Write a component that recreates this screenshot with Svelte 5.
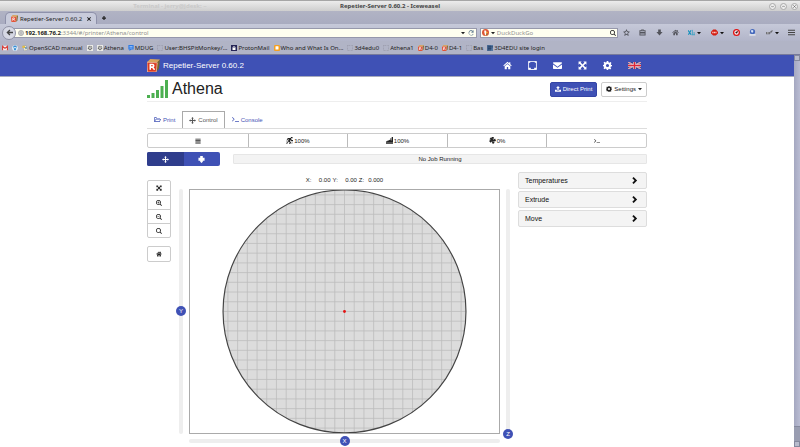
<script>
  const paths = {
    home: 'M8 1.5 0.5 8l1.2 1.2L8 4l6.300 5.200L15.500 8 13 5.800V2h-2v2zM8 5.400 3 9.500V14.500h3.800V10.500h2.400v4H13V9.500z',
    mail: 'M0 3.200Q0 2 1.200 2h13.600Q16 2 16 3.200V4L8 10 0 4zM0 6l8 6 8-6v6.800Q16 14 14.800 14H1.200Q0 14 0 12.800z',
    expand: 'M1 1h5.500L4.700 2.800 8 6.100l3.300-3.300L9.500 1H15v5.500l-1.800-1.800L9.900 8l3.300 3.300L15 9.500V15H9.500l1.800-1.800L8 9.900l-3.300 3.300L6.500 15H1V9.500l1.800 1.800L6.100 8 2.800 4.700 1 6.500z',
    gear: 'M6.700 0h2.600l.5 2.300 1.500.6 2-1.300 1.800 1.900-1.300 2 .6 1.400L16 7v2.500l-2 .4-.7 1.500 1.300 2-1.900 1.800-2-1.300-1.400.6L9.300 16H6.700l-.5-2-1.500-.6-2 1.300-1.800-1.900 1.300-2L1.600 9.900 0 9.500V7l1.600-.4.6-1.500-1.300-2 1.800-1.800 2 1.300 1.500-.6zM8 5.200a2.800 2.800 0 1 0 0 5.600 2.800 2.800 0 0 0 0-5.600z',
    upload: 'M8 0l5 5.500h-3V10H6V5.500H3zM0 10h4.500v2h7v-2H16v5.500H0z',
    move: 'M8 0l3 3.500H9.200v3.300h3.300V5L16 8l-3.500 3V9.200H9.200v3.300H11L8 16l-3-3.500h1.800V9.200H3.500V11L0 8l3.500-3v1.800h3.300V3.500H5z',
    folder: 'M.5 13.500V3h5l1.500 2h6v2h3L13 13.500zM2 10l2-3h7.500V6.200H6L4.600 4.500H2zM2.400 12.200h9.800L13.900 8.200H4.800z',
    terminal: 'M0 3.500 1 2.500 6 7.500 1 12.500 0 11.500 4 7.500zM7 12h9v1.500H7z',
    bars: 'M1 2h14v2H1zM1 5.500h14v2H1zM1 9h14v2H1zM1 12.500h14v2H1z',
    chevron: 'M3 3l3-3 8 8-8 8-3-3 5-5z',
    speed: 'M11 0h4v3h-4zM4 2.500h7l2 4.500h3v2h-4l-1.500-2L9 9.500l2.500 2.500-2 4H7l1.500-3.500L6 10.500 3.500 15H0v-2h2.500L6.500 5h-2L3 8H1zM12 11h4v1h-4zM11 13.500h4v1h-4zM0 9.500h3v1H0z',
    flow: 'M0 10l4-1V7l3 1.500V6l3 1.500V3h2v5h1V0h3v13H0zM0 14h16v2H0z',
    fan: 'M6 0h5l-.5 4L9.500 7 14 3.500 16 9l-4 1-3-1 4 4-4 3-2-3 .500-4L4 13l-4-4 3-2 3 .500L1 5l3-4 3 1.500L7.500 6z',
    extruder: 'M5 0h6v4h4v7h-4v2l-3 3-3-3v-2H1V4h4z',
    zoomIn: 'M6.500 0a6.500 6.500 0 1 0 3.800 11.800L14.500 16l1.500-1.500-4.200-4.200A6.500 6.500 0 0 0 6.500 0zm0 2a4.500 4.500 0 1 1 0 9 4.500 4.500 0 0 1 0-9zM5.700 3.800v2H3.800v1.500h1.900v2h1.600v-2h1.900V5.800H7.300v-2z',
    zoomOut: 'M6.500 0a6.500 6.500 0 1 0 3.800 11.800L14.500 16l1.500-1.500-4.200-4.200A6.500 6.500 0 0 0 6.500 0zm0 2a4.500 4.500 0 1 1 0 9 4.500 4.500 0 0 1 0-9zM3.800 5.800v1.500h5.400V5.800z',
    search: 'M6.500 0a6.500 6.500 0 1 0 3.800 11.800L14.500 16l1.500-1.500-4.200-4.200A6.500 6.500 0 0 0 6.500 0zm0 2a4.500 4.500 0 1 1 0 9 4.500 4.500 0 0 1 0-9z',
    caret: 'M0 4h16L8 13z',
    back: 'M8 1 1 8l7 7 2-2.200L7 9.800h9V6.200H7l3-3z',
    plus: 'M5.500 0h5v5.500H16v5h-5.500V16h-5v-5.500H0v-5h5.500z',
    cross: 'M2 0l6 5 6-5 2 2-5 6 5 6-2 2-6-5-6 5-2-2 5-6-5-6z',
    reload: 'M13 2l2-2v7H8l3-3a5 5 0 1 0 2 6l2 .6A7 7 0 1 1 13 2z',
    down: 'M5 1h6v6h4l-7 8-7-8h4z',
    star: 'M8 0l2.300 5.300L16 6l-4.200 3.900L13 16l-5-3-5 3 1.200-6.100L0 6l5.700-.700zM8 4 6.700 6.700l-3 .500L6 9.300l-.6 3L8 10.800l2.600 1.500-.6-3 2.300-2.100-3-.500z',
    clip: 'M1 3h4V1h6v2h4v12H1zM3 5v2h10V5zM3 9v1h10V9zM3 12v1h10v-1zM6 2v1h4V2z'
  };

  const bookmarks = [
    { icon: 'gmail', text: '' },
    { icon: 'blue', text: '' },
    { icon: 'scad', text: 'OpenSCAD manual' },
    { icon: 'cog', text: '' },
    { icon: 'cog', text: 'Athena' },
    { icon: 'mdug', text: 'MDUG' },
    { icon: 'blank', text: 'User:BHSPitMonkey/...' },
    { icon: 'proton', text: 'ProtonMail' },
    { icon: 'orange', text: 'Who and What Is On...' },
    { icon: 'blank', text: '3d4edu0' },
    { icon: 'blank', text: 'Athena1' },
    { icon: 'rep', text: 'D4-0' },
    { icon: 'rep', text: 'D4-1' },
    { icon: 'blank', text: 'Bas' },
    { icon: 'edu', text: '3D4EDU site login' }
  ];

  const gridLines = Array.from({ length: 25 }, (_, i) => -120 + i * 10);

  let x = $state(50);
  let y = $state(50);
  let z = $state(0);
  let mode = $state('move');
</script>

{#snippet icon(name)}
  <svg class="ico" viewBox="0 0 16 16" aria-hidden="true"><path d={paths[name]} fill="currentColor" fill-rule="evenodd" /></svg>
{/snippet}

{#snippet repetier()}
  <svg class="ico" viewBox="0 0 24 24" aria-hidden="true">
    <path d="M0 6 6 0l18 1-5 6z" fill="#d9a45c" /><path d="M18 7l6-6-2 17-5 6z" fill="#75662c" />
    <path d="M0 6l19 1-2 17H1z" fill="#dc3a22" stroke="#f0b79a" stroke-width="1.500" />
    <path d="M6 20V10h4a2.500 2.500 0 0 1 0 5H7m3 0 4 5" fill="none" stroke="#fff" stroke-width="2.800" />
  </svg>
{/snippet}

{#snippet bookmarkIcon(name)}
  {#if name === 'rep'}{@render repetier()}
  {:else}
    <svg class="ico" viewBox="0 0 16 16" aria-hidden="true">
      {#if name === 'gmail'}
        <path d="M0 2h16v12H0z" fill="#f6eeee" /><path d="M1.500 14V3.500L8 9l6.500-5.500V14" fill="none" stroke="#d8403a" stroke-width="3" />
      {:else if name === 'blue'}
        <circle cx="8" cy="8" r="7.500" fill="#e8f2fb" /><path d="M3 6a5 5 0 0 1 10 0l-2 1-3-3-3 3zM4 10l4-2 4 2-4 5z" fill="#2484d0" />
      {:else if name === 'scad'}
        <path d="M2 3l9-2 4 12-9 3z" fill="#f2ead0" stroke="#7b8794" /><path d="M1 2h7v6H1z" fill="#e7bf45" /><path d="M7 7l6-1M8 10l5-1" stroke="#4b84aa" stroke-width="2" />
      {:else if name === 'cog'}
        <path d="M0 0h16v16H0z" fill="#ebebe6" /><circle cx="8" cy="8" r="4.500" fill="none" stroke="#55575a" stroke-width="3" stroke-dasharray="2 1.500" /><circle cx="8" cy="8" r="3" fill="none" stroke="#55575a" />
      {:else if name === 'mdug'}
        <path d="M1 0h14v12H9l-5 4v-4H1z" fill="#2d7be5" /><path d="M4 4h8M4 8h8" stroke="#d6e5ff" stroke-width="1.500" />
      {:else if name === 'proton'}
        <path d="M0 0h16v16H0z" fill="#272657" /><path d="M4 13V7a4 4 0 0 1 8 0v6z" fill="#fff" /><path d="M6 7a2 2 0 0 1 4 0z" fill="#272657" />
      {:else if name === 'orange'}
        <rect width="16" height="16" rx="3" fill="#f5a021" /><rect x="4" y="3" width="8" height="9" rx="1" fill="#fff" />
      {:else if name === 'edu'}
        <path d="M0 0h16v16H0z" fill="#5678a2" /><path d="M3 1v14M8 1v14M4 5h12M3 10h9" stroke="#1c365e" stroke-width="2" />
      {:else}
        <rect x="1" y="1" width="14" height="14" rx="1" fill="none" stroke="#858692" stroke-width="1.500" stroke-dasharray="2 2" />
      {/if}
    </svg>
  {/if}
{/snippet}

<div class="window">
  <header class="chrome">
    <div class="titlebar">
      <span class="ghost">Terminal - jerry@jdesk: ~</span>
      <strong>Repetier-Server 0.60.2 - Iceweasel</strong>
      <div class="winbtns">
        <button aria-label="Minimize"><svg class="ico" viewBox="0 0 16 16"><path d="M4 6l4 4 4-4" fill="none" stroke="#555" stroke-width="2" /></svg></button>
        <button aria-label="Maximize"><svg class="ico" viewBox="0 0 16 16"><path d="M4 10l4-4 4 4" fill="none" stroke="#555" stroke-width="2" /></svg></button>
        <button aria-label="Close"><svg class="ico" viewBox="0 0 16 16"><path d="M4 4l8 8M12 4l-8 8" fill="none" stroke="#555" stroke-width="2" /></svg></button>
      </div>
    </div>

    <div class="tabstrip">
      <div class="browsertab">
        {@render repetier()}<span>Repetier-Server 0.60.2</span>
        <button class="tiny" aria-label="Close tab">{@render icon('cross')}</button>
      </div>
      <button class="tiny" aria-label="New tab">{@render icon('plus')}</button>
    </div>

    <div class="toolbar">
      <button class="back" aria-label="Back">{@render icon('back')}</button>
      <div class="field url">
        <svg class="ico" viewBox="0 0 16 16" aria-hidden="true"><circle cx="8" cy="8" r="7" fill="#ddd" stroke="#999" stroke-width="1.500" /><path d="M1 8h14M8 1v14M3 4q5 3 10 0M3 12q5-3 10 0" fill="none" stroke="#999" /></svg>
        <label for="url">192.168.76.2</label><input id="url" type="text" value=":3344/#/printer/Athena/control" />
        <button class="caret" aria-label="History">{@render icon('caret')}</button>
        <button class="reload" aria-label="Reload">{@render icon('reload')}</button>
      </div>
      <div class="field find">
        <svg class="ico" viewBox="0 0 16 16" aria-hidden="true"><circle cx="8" cy="8" r="8" fill="#dc5734" /><path d="M6 3q5 0 4 5l-1 6H7L5 6z" fill="#fff" /><path d="M9 7h4v2H9z" fill="#f6c52d" /><path d="M9 11h3v2H9z" fill="#57a541" /></svg>
        <button class="caret" aria-label="Search engine">{@render icon('caret')}</button>
        <input type="text" aria-label="Search" placeholder="DuckDuckGo" />
        <button class="mag" aria-label="Go">{@render icon('search')}</button>
      </div>
      <div class="tools">
        <button aria-label="Bookmark">{@render icon('star')}</button>
        <button aria-label="Bookmarks list">{@render icon('clip')}</button>
        <button aria-label="Downloads">{@render icon('down')}</button>
        <button aria-label="Home">{@render icon('home')}</button>
        <button aria-label="Downloader"><svg class="ico" viewBox="0 0 16 16"><path d="M0 3l7 10M7 3l-6 10" stroke="#1591bd" stroke-width="2.500" /><path d="M10 2v12M14 7v7M8 13h8" stroke="#42a4c4" stroke-width="2" /></svg><span class="caret">{@render icon('caret')}</span></button>
        <button aria-label="Ad blocker"><svg class="ico" viewBox="0 0 16 16"><path d="M5 1h6l5 5v4l-5 5H5l-5-5V6z" fill="#d41f13" /><path d="M3 8h10" stroke="#ffd7d2" stroke-width="3" stroke-dasharray="2.500 1" /></svg><span class="caret">{@render icon('caret')}</span></button>
        <button aria-label="Record"><svg class="ico" viewBox="0 0 16 16"><circle cx="8" cy="8" r="6.500" fill="#fff" stroke="#e01111" stroke-width="3" /><circle cx="8" cy="8" r="2.500" fill="#3b1010" /><path d="M8 8l3-3" stroke="#3b1010" stroke-width="2" /></svg></button>
        <button aria-label="Network"><svg class="ico" viewBox="0 0 16 16"><circle cx="8" cy="6" r="6" fill="#4569bc" /><path d="M4 4q3-3 6 0l-1 4H6z" fill="#d9e6fa" /><path d="M1 12h14v3H1z" fill="#eceff4" /></svg></button>
        <button aria-label="Proxy"><svg class="ico" viewBox="0 0 16 16"><path d="M0 7h9v5H0zM10 5l5-3v3l-5 6z" fill="#6b6b70" /><path d="M2 9h4" stroke="#ddd" stroke-width="2" /></svg><span class="caret">{@render icon('caret')}</span></button>
        <button aria-label="Menu"><svg class="ico" viewBox="0 0 16 16"><path d="M0 3h16M0 8h16M0 13h16" stroke="#444" stroke-width="2.500" /></svg></button>
      </div>
    </div>

    <nav class="bookmarks" aria-label="Bookmarks">
      {#each bookmarks as b}
        <a href="#bookmark" aria-label={b.text || b.icon}>{@render bookmarkIcon(b.icon)}{#if b.text}<span>{b.text}</span>{/if}</a>
      {/each}
    </nav>
  </header>

  <div class="viewport">
    <div class="page">
      <div class="appbar">
        <div class="container bar">
          <a class="brand" href="#home">{@render repetier()}<span>Repetier-Server 0.60.2</span></a>
          <nav class="appnav" aria-label="Server">
            <a href="#home" aria-label="Home">{@render icon('home')}</a>
            <a href="#printers" aria-label="Printers"><svg class="ico" viewBox="0 0 16 16"><path d="M1 .8h14v14.400H1z" fill="none" stroke="#fff" stroke-width="1.500" /><path d="M1 12h4v2h6v-2h4v3H1zM1 1h3v2H1zM12 1h3v2h-3z" fill="#fff" /></svg></a>
            <a href="#messages" aria-label="Messages">{@render icon('mail')}</a>
            <a href="#fullscreen" aria-label="Full screen">{@render icon('expand')}</a>
            <a href="#settings" aria-label="Settings">{@render icon('gear')}</a>
            <a class="flag" href="#language" aria-label="Language"><svg viewBox="0 0 26 14"><path d="M0 0h26v14H0z" fill="#35438f" /><path d="M0 0l26 14M26 0 0 14" stroke="#e8e8ee" stroke-width="2.800" /><path d="M0 0l26 14M26 0 0 14" stroke="#d53645" stroke-width="1" /><path d="M13 0v14M0 7h26" stroke="#f2eef0" stroke-width="5" /><path d="M13 0v14M0 7h26" stroke="#dc2638" stroke-width="3" /></svg></a>
          </nav>
        </div>
      </div>

      <main class="container">
        <div class="heading">
          <svg class="signal" viewBox="0 0 21 18" aria-hidden="true"><path d="M0 15h3v3H0zM4.500 13h3v5h-3zM9 10h3v8H9zM13.500 6h3v12h-3zM18 0h3v18h-3z" fill="#4caf50" /></svg>
          <h1>Athena</h1>
          <button class="primary">{@render icon('upload')}Direct Print</button>
          <button class="plain">{@render icon('gear')}Settings<span class="caret">{@render icon('caret')}</span></button>
        </div>

        <nav class="tabs" aria-label="Printer">
          <a href="#print">{@render icon('folder')}Print</a>
          <a class="active" href="#control">{@render icon('move')}Control</a>
          <a href="#console">{@render icon('terminal')}Console</a>
        </nav>

        <div class="group">
          <button aria-label="Menu">{@render icon('bars')}</button>
          <button class="wide">{@render icon('speed')}100%</button>
          <button class="wide">{@render icon('flow')}100%</button>
          <button class="wide">{@render icon('fan')}0%</button>
          <button aria-label="G-code">{@render icon('terminal')}</button>
        </div>

        <div class="jobrow">
          <div class="toggle">
            <button class:on={mode === 'move'} aria-label="Move head" onclick={() => (mode = 'move')}>{@render icon('move')}</button>
            <button class:on={mode === 'extrude'} aria-label="Extruder" onclick={() => (mode = 'extrude')}>{@render icon('extruder')}</button>
          </div>
          <div class="job">No Job Running</div>
        </div>

        <div class="columns">
          <div class="zoomcol">
            <div class="vgroup">
              <button aria-label="Fit">{@render icon('expand')}</button>
              <button aria-label="Zoom in">{@render icon('zoomIn')}</button>
              <button aria-label="Zoom out">{@render icon('zoomOut')}</button>
              <button aria-label="Reset zoom">{@render icon('search')}</button>
            </div>
            <div class="vgroup"><button aria-label="Home all">{@render icon('home')}</button></div>
          </div>

          <div class="bed">
            <div class="readout"><span>X:</span><span class="num">0.00</span><span>Y:</span><span class="num">0.00</span><span>Z:</span><span class="num">0.000</span></div>
            <div class="track vert yaxis">
              <input type="range" aria-label="Y position" bind:value={y} /><span class="knob" style:top="{100 - y}%">Y</span>
            </div>
            <svg class="plate" viewBox="-159 -125 318 250" role="img" aria-label="Print bed">
              <defs><clipPath id="disc"><circle r="125" /></clipPath></defs>
              <circle r="125" fill="#dcdcdc" />
              <g clip-path="url(#disc)" stroke="#bcbcbc" stroke-width="0.800">
                {#each gridLines as g}
                  <line x1={g} x2={g} y1="-125" y2="125" /><line y1={g} y2={g} x1="-125" x2="125" />
                {/each}
              </g>
              <circle r="125" fill="none" stroke="#444" stroke-width="1.200" />
              <circle r="1.500" fill="#e31313" />
            </svg>
            <div class="track vert zaxis">
              <input type="range" aria-label="Z position" bind:value={z} /><span class="knob" style:top="{100 - z}%">Z</span>
            </div>
            <div class="track horiz">
              <input type="range" aria-label="X position" bind:value={x} /><span class="knob" style:left="{x}%">X</span>
            </div>
          </div>

          <div class="panels">
            {#each ['Temperatures', 'Extrude', 'Move'] as title}
              <button><span>{title}</span>{@render icon('chevron')}</button>
            {/each}
          </div>
        </div>
      </main>
    </div>
    <div class="scrollbar" aria-hidden="true"><i></i><b></b><i></i></div>
  </div>
</div>

<style>
  :global(body) { margin: 0; background: #fff; }
  .window { display: flex; flex-direction: column; min-height: 100vh; font-family: "Liberation Sans", Arial, sans-serif; font-size: 6px; line-height: 8px; color: #222; }
  .window :is(button, input) { font: inherit; color: inherit; margin: 0; padding: 0; border: 0; background: none; box-sizing: border-box; }
  button { display: flex; align-items: center; justify-content: center; gap: 2px; white-space: nowrap; }
  a { color: inherit; text-decoration: none; }
  .ico { display: block; width: 7px; height: 7px; flex: none; }
  .caret .ico { width: 4px; height: 4px; }

  .chrome { height: 55px; box-sizing: border-box; border-bottom: 1px solid #777a9b; background: #aeb1c4; font-family: "Noto Sans", "DejaVu Sans", sans-serif; color: #222; }
  .titlebar { display: grid; grid-template-columns: 1fr auto 1fr; align-items: center; height: 11px; box-sizing: border-box; padding-right: 2px; border-top: 1px solid #a6a6a6; background: linear-gradient(#ececec, #cecece); color: #444; }
  .titlebar .ghost { justify-self: center; padding-left: 0; color: #c9c9c9; font-weight: bold; }
  .titlebar strong { padding-right: 18px; }
  .winbtns { display: flex; justify-content: flex-end; gap: 4px; }
  .window .winbtns button { width: 7px; height: 7px; border: 1px solid #aaa; border-radius: 50%; background: #eee; }
  .winbtns .ico { width: 5px; height: 5px; }
  .tabstrip { display: flex; align-items: flex-end; gap: 5px; height: 13px; padding-left: 5px; background: linear-gradient(#b1b3c4, #a9acc0); }
  .browsertab { display: flex; align-items: center; gap: 2px; width: 92px; height: 12px; box-sizing: border-box; padding: 0 5px; border: 1px solid #8e91aa; border-bottom: 0; border-radius: 5px 5px 0 0; background: #c8cbdb; }
  .window .browsertab .tiny { margin-left: auto; }
  .tiny .ico { width: 4px; height: 4px; }
  .tabstrip > .tiny { height: 12px; }
  .toolbar { display: flex; align-items: center; height: 17px; background: linear-gradient(#c6c9d9, #b2b5c9); }
  .window .back { width: 14px; height: 14px; margin: 0 -3px 0 2px; border: 1px solid #9092a5; border-radius: 50%; background: #d6d8e4; color: #444; z-index: 1; }
  .field { display: flex; align-items: center; height: 10px; box-sizing: border-box; border: 1px solid #9698ab; background: #fffff0; }
  .window .field input { flex: 1; min-width: 0; height: 8px; outline: 0; color: #929292; }
  .field input::placeholder { color: #929292; opacity: 1; }
  .url { flex: 466; padding: 0 2px 0 4px; }
  .url label { padding-left: 1px; font-weight: bold; }
  .url .ico { width: 6px; height: 6px; }
  .url .caret .ico { width: 4px; height: 4px; }
  .window .reload { padding-left: 3px; color: #71899a; }
  .find { flex: 137; gap: 2px; margin-left: 3px; padding: 0 1px; }
  .find .mag .ico { width: 6px; height: 6px; }
  .tools { flex: 176; display: flex; align-items: center; justify-content: space-between; padding: 0 5px; color: #53545c; }
  .tools .caret { color: #111; }
  .bookmarks { display: flex; align-items: center; gap: 4px; height: 13px; padding-left: 2px; background: #b1b4c6; white-space: nowrap; }
  .bookmarks a { display: flex; align-items: center; gap: 1px; }
  .bookmarks .ico { width: 6px; height: 6px; }

  .viewport { flex: 1; display: flex; }
  .page { flex: 1; min-width: 0; background: #fff; }
  .scrollbar { display: flex; flex-direction: column; width: 6px; box-sizing: border-box; background: #999db1; }
  .scrollbar i { height: 6px; background: #b9bccd; border: 1px solid #85899e; box-sizing: border-box; }
  .scrollbar b { flex: 1; margin-bottom: 14px; background: linear-gradient(90deg, #a5a8c0, #b9bcd3); border-bottom: 1px solid #85899e; }
  .container { width: 500px; max-width: 100%; margin: 0 auto; }
  .appbar { background: #3f51b5; border-bottom: 1px solid #a7abbd; }
  .bar { display: flex; align-items: center; justify-content: space-between; height: 21px; color: #fff; }
  .brand { display: flex; align-items: center; gap: 3px; font-size: 8px; line-height: 10px; }
  .brand .ico { width: 13px; height: 13px; }
  .appnav { display: flex; align-items: center; gap: 16px; padding-right: 6px; }
  .appnav .ico { width: 9px; height: 9px; }
  .flag svg { display: block; width: 13px; height: 7px; }

  .heading { display: flex; align-items: center; gap: 4px; height: 24px; border-bottom: 1px solid #eee; }
  .heading h1 { flex: 1; margin: 0; font-size: 16px; line-height: 18px; font-weight: normal; color: #222; }
  .signal { width: 21px; height: 18px; }
  .heading button { height: 15px; border-radius: 2px; }
  .window .primary { padding: 0 4px; border: 1px solid #3444a5; background: #3f51b5; color: #fff; }
  .window .plain { padding: 0 4px; border: 1px solid #ccc; background: #fff; color: #222; }
  .heading .ico { width: 6px; height: 6px; }
  .heading .caret .ico { width: 4px; height: 4px; }

  .tabs { display: flex; margin-top: 9px; border-bottom: 1px solid #ddd; color: #3f51b5; }
  .tabs a { display: flex; align-items: center; gap: 2px; height: 17px; padding: 0 7px; box-sizing: border-box; }
  .tabs .ico { width: 7px; height: 7px; }
  .tabs .active { padding: 0 6px; border: 1px solid #aaa; border-bottom: 0; color: #555; }

  .group { display: grid; grid-template-columns: repeat(5, 1fr); height: 15px; margin-top: 4px; box-sizing: border-box; border: 1px solid #ccc; border-radius: 2px; }
  .window .group button + button { border-left: 1px solid #bbb; }
  .group .ico { width: 6px; height: 6px; }
  .group .wide { gap: 1px; }
  .group .wide .ico { width: 7px; height: 7px; }
  .jobrow { display: flex; align-items: center; gap: 13px; margin-top: 4px; }
  .toggle { display: flex; width: 73px; height: 14px; overflow: hidden; border-radius: 2px; background: #3f51b5; color: #fff; }
  .toggle button { flex: 1; }
  .window .toggle .on { background: #2f3d8c; }
  .job { flex: 1; height: 8px; border: 1px solid #e6e6e6; border-radius: 1px; background: #f3f3f3; text-align: center; }

  .columns { display: grid; grid-template-columns: 24px minmax(0, 1fr) 129px; gap: 8px; margin-top: 6px; align-items: start; }
  .zoomcol { display: grid; gap: 8px; padding-top: 8px; }
  .vgroup { border: 1px solid #ccc; border-radius: 2px; }
  .vgroup button { width: 100%; height: 14px; }
  .window .vgroup button + button { border-top: 1px solid #ccc; }
  .vgroup .ico { width: 6px; height: 6px; }
  .bed { display: grid; grid-template-columns: 4px minmax(0, 1fr) 4px; column-gap: 6px; }
  .readout { grid-column: 2; display: flex; justify-content: center; gap: 2px; padding: 4px 0 5px; }
  .num { min-width: 17px; text-align: right; }
  .plate { grid-row: 2; grid-column: 2; display: block; width: 100%; box-sizing: border-box; border: 1px solid #aaa; }
  .track { position: relative; border-radius: 2px; background: #eee; }
  .vert { grid-row: 2; width: 4px; }
  .yaxis { grid-column: 1; }
  .zaxis { grid-column: 3; }
  .horiz { grid-row: 3; grid-column: 2; height: 4px; margin-top: 5px; }
  .track input { position: absolute; appearance: none; display: block; }
  .horiz input { left: -5px; top: -3px; width: calc(100% + 10px); height: 10px; }
  .vert input { left: -3px; top: -5px; width: 10px; height: calc(100% + 10px); writing-mode: vertical-lr; direction: rtl; }
  .track input::-webkit-slider-runnable-track { appearance: none; background: none; }
  .track input::-webkit-slider-thumb { appearance: none; width: 10px; height: 10px; border-radius: 50%; background: #3f51b5; }
  .knob { position: absolute; width: 8px; margin: -4px; color: #fff; text-align: center; pointer-events: none; }
  .vert .knob { left: 50%; }
  .horiz .knob { top: 50%; }

  .panels { display: grid; gap: 2px; }
  .panels button { height: 17px; justify-content: space-between; }
  .window .panels button { padding: 0 8px 0 6px; border: 1px solid #ddd; border-radius: 2px; background: #f4f4f4; font-size: 7px; color: #111; }
</style>
